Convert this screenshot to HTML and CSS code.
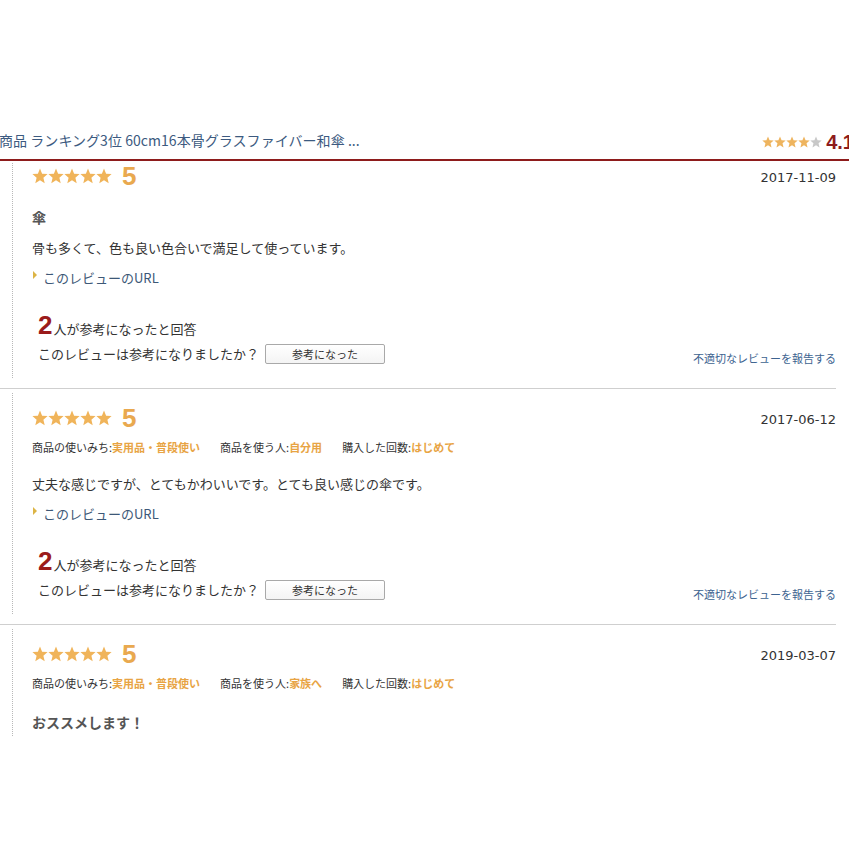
FILE: index.html
```html
<!DOCTYPE html>
<html lang="ja">
<head>
<meta charset="utf-8">
<title>レビュー</title>
<link rel="stylesheet" href="styles.css">
</head>
<body>
<svg width="0" height="0" class="defs" aria-hidden="true">
  <defs>
    <symbol id="star" viewBox="0 0 16 16">
      <polygon points="8,0.6 10.1,5.7 15.6,6.1 11.4,9.7 12.7,15.2 8,12.3 3.3,15.2 4.6,9.7 0.4,6.1 5.9,5.7"/>
    </symbol>
  </defs>
</svg>
<div class="page">
  <header class="header">
    <a class="product-title">商品 ランキング3位 60cm16本骨グラスファイバー和傘 ...</a>
    <div class="overall">
      <svg class="stars-sm" width="60" height="12" viewBox="0 0 60 12">
        <use href="#star" x="0" y="0" width="12" height="12" class="on"/>
        <use href="#star" x="12" y="0" width="12" height="12" class="on"/>
        <use href="#star" x="24" y="0" width="12" height="12" class="on"/>
        <use href="#star" x="36" y="0" width="12" height="12" class="on"/>
        <use href="#star" x="48" y="0" width="12" height="12" class="off"/>
      </svg>
      <span class="overall-score">4.1</span>
    </div>
  </header>

  <div class="reviews">
    <article class="review first">
      <div class="review-inner">
        <div class="head">
          <div class="rating">
            <svg class="stars" width="80" height="16" viewBox="0 0 80 16">
              <use href="#star" x="0" width="16" height="16"/><use href="#star" x="16" width="16" height="16"/><use href="#star" x="32" width="16" height="16"/><use href="#star" x="48" width="16" height="16"/><use href="#star" x="64" width="16" height="16"/>
            </svg>
            <span class="score">5</span>
          </div>
          <span class="date">2017-11-09</span>
        </div>
        <h3 class="title">傘</h3>
        <p class="body">骨も多くて、色も良い色合いで満足して使っています。</p>
        <a class="url"><span class="tri"></span>このレビューのURL</a>
        <div class="helpful"><span class="count">2</span>人が参考になったと回答</div>
        <div class="question-row">
          <div class="question">このレビューは参考になりましたか？<button class="btn">参考になった</button></div>
          <a class="report">不適切なレビューを報告する</a>
        </div>
      </div>
    </article>

    <article class="review">
      <div class="review-inner">
        <div class="head">
          <div class="rating">
            <svg class="stars" width="80" height="16" viewBox="0 0 80 16">
              <use href="#star" x="0" width="16" height="16"/><use href="#star" x="16" width="16" height="16"/><use href="#star" x="32" width="16" height="16"/><use href="#star" x="48" width="16" height="16"/><use href="#star" x="64" width="16" height="16"/>
            </svg>
            <span class="score">5</span>
          </div>
          <span class="date">2017-06-12</span>
        </div>
        <div class="meta">
          <span class="meta-item">商品の使いみち:<b>実用品・普段使い</b></span>
          <span class="meta-item">商品を使う人:<b>自分用</b></span>
          <span class="meta-item">購入した回数:<b>はじめて</b></span>
        </div>
        <p class="body">丈夫な感じですが、とてもかわいいです。とても良い感じの傘です。</p>
        <a class="url"><span class="tri"></span>このレビューのURL</a>
        <div class="helpful"><span class="count">2</span>人が参考になったと回答</div>
        <div class="question-row">
          <div class="question">このレビューは参考になりましたか？<button class="btn">参考になった</button></div>
          <a class="report">不適切なレビューを報告する</a>
        </div>
      </div>
    </article>

    <article class="review last">
      <div class="review-inner">
        <div class="head">
          <div class="rating">
            <svg class="stars" width="80" height="16" viewBox="0 0 80 16">
              <use href="#star" x="0" width="16" height="16"/><use href="#star" x="16" width="16" height="16"/><use href="#star" x="32" width="16" height="16"/><use href="#star" x="48" width="16" height="16"/><use href="#star" x="64" width="16" height="16"/>
            </svg>
            <span class="score">5</span>
          </div>
          <span class="date">2019-03-07</span>
        </div>
        <div class="meta">
          <span class="meta-item">商品の使いみち:<b>実用品・普段使い</b></span>
          <span class="meta-item">商品を使う人:<b>家族へ</b></span>
          <span class="meta-item">購入した回数:<b>はじめて</b></span>
        </div>
        <h3 class="title">おススメします！</h3>
      </div>
    </article>
  </div>
</div>
</body>
</html>
```
FILE: styles.css
```css
html, body {
  margin: 0;
  padding: 0;
  overflow: hidden;
  background: #fff;
}
body {
  font-family: "Noto Sans CJK JP", sans-serif;
  color: #333;
  width: 849px;
  height: 849px;
}
.defs {
  position: absolute;
  width: 0;
  height: 0;
}
.page {
  width: 849px;
}
.header {
  height: 161px;
  width: 854px;
  box-sizing: border-box;
  border-bottom: 2px solid #8e1c1c;
  display: flex;
  justify-content: space-between;
  align-items: flex-end;
  padding-bottom: 9px;
}
.product-title {
  font-size: 14px;
  line-height: 20px;
  color: #3c5a80;
  margin-left: -1px;
  letter-spacing: 0.05px;
}
.overall {
  display: flex;
  align-items: center;
  gap: 4px;
  margin-bottom: -4px;
}
.stars-sm .on { fill: #eeb45e; }
.stars-sm .off { fill: #c8c8c8; }
.overall-score {
  font-family: "Liberation Sans", Arial, sans-serif;
  font-weight: bold;
  font-size: 20px;
  line-height: 24px;
  color: #8e1c1c;
}
.reviews {
  width: 836px;
}
.review {
  border-bottom: 1px solid #cfcfcf;
  padding: 4px 0 10px 12px;
}
.review.first {
  padding-top: 0;
}
.review.last {
  border-bottom: none;
  padding-bottom: 0;
}
.review-inner {
  border-left: 1px dotted #b8b8b8;
  padding: 12px 0 13px 19px;
}
.review.first .review-inner {
  margin-top: 2px;
  padding-top: 0;
}
.review.last .review-inner {
  padding-bottom: 4px;
}
.head {
  height: 26px;
  display: flex;
  justify-content: space-between;
  align-items: center;
}
.rating {
  display: flex;
  align-items: center;
  gap: 10px;
}
.stars {
  fill: #f0b45a;
  display: block;
}
.score {
  font-family: "Liberation Sans", Arial, sans-serif;
  font-weight: bold;
  font-size: 26px;
  line-height: 26px;
  color: #e9a94f;
}
.date {
  font-family: "DejaVu Sans", Verdana, sans-serif;
  font-size: 13px;
  color: #333;
  margin-top: 2px;
}
.meta {
  margin-top: 8px;
  font-size: 11px;
  line-height: 16px;
  display: flex;
  color: #333;
}
.meta-item {
  margin-right: 20px;
}
.meta-item b {
  color: #e8a444;
  font-weight: bold;
}
.title {
  margin: 0;
  font-size: 14px;
  line-height: 20px;
  font-weight: bold;
  color: #555;
}
.head + .title { margin-top: 18px; }
.meta + .title { margin-top: 21px; }
.body {
  margin: 0;
  font-size: 13px;
  line-height: 20px;
  color: #333;
}
.title + .body { margin-top: 11px; }
.meta + .body { margin-top: 19px; }
.url {
  display: flex;
  align-items: center;
  margin-top: 10px;
  font-size: 13px;
  line-height: 20px;
  color: #3d5877;
}
.tri {
  width: 0;
  height: 0;
  border-top: 4px solid transparent;
  border-bottom: 4px solid transparent;
  border-left: 4px solid #dcb445;
  margin: -6px 6px 0 1px;
}
.helpful {
  margin-top: 23px;
  padding-left: 6px;
  font-size: 13px;
  line-height: 28px;
  display: flex;
  align-items: baseline;
}
.count {
  font-family: "Liberation Sans", Arial, sans-serif;
  font-weight: bold;
  font-size: 26px;
  color: #9b1b1b;
  margin-right: 1px;
}
.question-row {
  display: flex;
  justify-content: space-between;
  align-items: flex-end;
}
.question {
  padding-left: 6px;
  font-size: 13px;
  line-height: 22px;
  display: flex;
  align-items: center;
}
.btn {
  margin-left: 6px;
  width: 120px;
  height: 20px;
  border: 1px solid #a9a9a9;
  border-radius: 2px;
  background: linear-gradient(#ffffff, #f4f4f4);
  font-family: "Noto Sans CJK JP", sans-serif;
  font-size: 11px;
  line-height: 16px;
  color: #333;
  padding: 0;
}
.report {
  font-size: 11px;
  line-height: 14px;
  color: #3d6390;
}
```
